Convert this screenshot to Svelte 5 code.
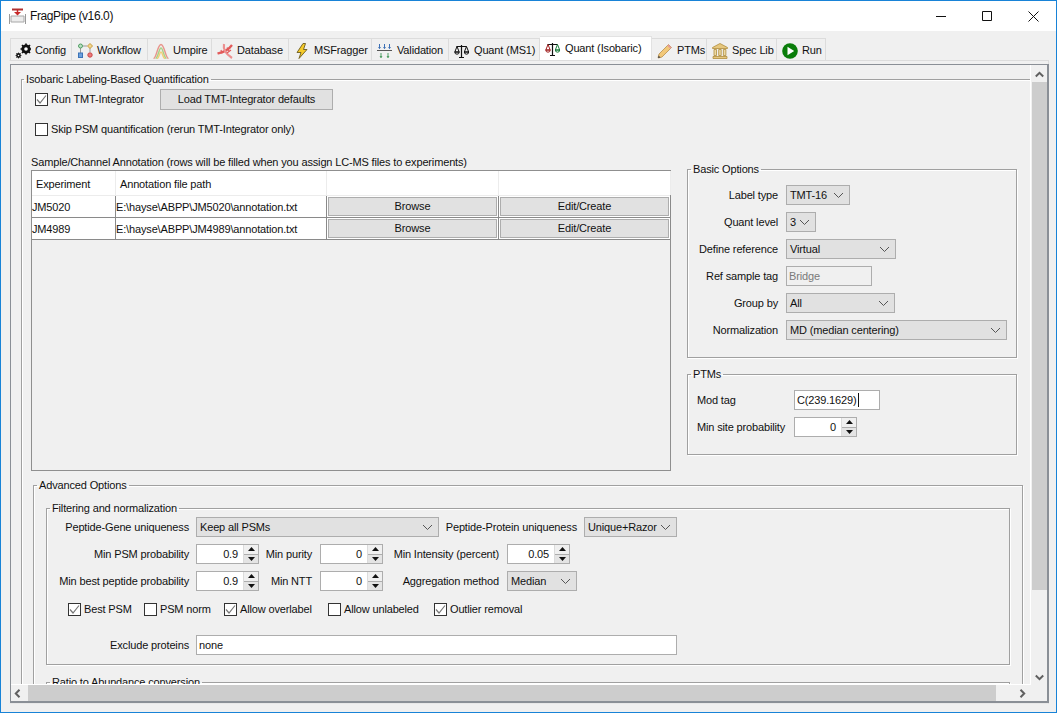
<script>
  const tabs = [
    ['Config', 'gear'], ['Workflow', 'flow'], ['Umpire', 'peak'], ['Database', 'dna'],
    ['MSFragger', 'bolt'], ['Validation', 'valid'], ['Quant (MS1)', 'scale'],
    ['Quant (Isobaric)', 'scale2'], ['PTMs', 'pencil'], ['Spec Lib', 'lib'], ['Run', 'run']
  ];
</script>

{#snippet combo(text, cls)}
  <div class="combo {cls}"><span>{text}</span>
    <svg class="chev" width="11" height="7" viewBox="0 0 11 7"><path d="M1 1l4.500 4.500L10 1" fill="none" stroke="#555" stroke-width="1"/></svg>
  </div>
{/snippet}

{#snippet spin(value, cls)}
  <div class="spin {cls}">
    <span class="val">{value}</span>
    <div class="arrows">
      <div class="ar"><svg width="7" height="4" viewBox="0 0 7 4"><path d="M3.500 0L7 4H0z" fill="#111"/></svg></div>
      <div class="ar"><svg width="7" height="4" viewBox="0 0 7 4"><path d="M0 0h7L3.500 4z" fill="#111"/></svg></div>
    </div>
  </div>
{/snippet}

{#snippet check(text, on, cls)}
  <div class="chk {cls}">
    <div class="box">
      {#if on}<svg width="11" height="11" viewBox="0 0 11 11"><path d="M1 5.500l3 3.500L10 1.500" fill="none" stroke="#777" stroke-width="1.200"/></svg>{/if}
    </div>
    <span>{text}</span>
  </div>
{/snippet}

{#snippet tabIcon(k)}
  <svg class="ticon" width="16" height="16" viewBox="0 0 16 16">
    {#if k === 'gear'}
      <circle cx="11" cy="6" r="3.200" fill="#fff" stroke="#111" stroke-width="2.800"/>
      <path d="M11 .5v2.500M11 9v2.500M5.500 6h2.500M14 6h2M7 2l2 2M15 2l-2 2M7 10l2-2M15 10l-2-2" stroke="#111" stroke-width="1.700"/>
      <circle cx="3.500" cy="12.500" r="1.600" fill="#fff" stroke="#111" stroke-width="1.600"/>
      <path d="M3.500 9.600v1M3.500 14.400v1M.6 12.500h1M5.400 12.500h1M1.400 10.400l.8.8M5.600 10.400l-.8.8M1.400 14.600l.8-.8M5.600 14.600l-.8-.8" stroke="#111" stroke-width=".9"/>
    {:else if k === 'flow'}
      <path d="M3.500 5v5M6 3h4M13 5v4" stroke="#999" stroke-width="1" fill="none"/>
      <circle cx="3.500" cy="3" r="2" fill="#b9e0c0" stroke="#4f9e63"/>
      <path d="M13 .5l2.500 2.500L13 5.500 10.500 3z" fill="#f2d68c" stroke="#c79a3a"/>
      <rect x="1.500" y="10" width="4" height="4.500" fill="#6da1dc" stroke="#3c74b8"/>
      <circle cx="13" cy="12" r="2.200" fill="#ee7b7b" stroke="#c84848"/>
    {:else if k === 'peak'}
      <path d="M.5 15.500C3.500 15.500 4.500 1.500 8 1.500s4.500 14 7.500 14" fill="none" stroke="#e8958c" stroke-width="1.500"/>
      <path d="M2.500 15.500C5 15.500 6 5 8 5s3 10.500 5.500 10.500" fill="none" stroke="#a9d08a" stroke-width="1.500"/>
      <path d="M4 15.500C6 15.500 6.500 9 8 9s2 6.500 4 6.500" fill="none" stroke="#f0cf78" stroke-width="1.500"/>
    {:else if k === 'dna'}
      <path d="M.5 10.500C4 9.500 10 9 15 2" fill="none" stroke="#e25a5a" stroke-width="2.200"/>
      <path d="M7 1c-1 5 2 10 8 14" fill="none" stroke="#ec9090" stroke-width="2.200"/>
      <path d="M4 7l1 3.500M10 4.500l2 3.500M10 10l4-3" stroke="#e25a5a" stroke-width="1.200"/>
    {:else if k === 'bolt'}
      <path d="M9 .5L3 9.500h4L5 15.500 13 6.500H9.500L11.500 .5z" fill="#f6cb2a" stroke="#6b5a1e" stroke-width=".9"/>
    {:else if k === 'valid'}
      <path d="M0 7.500h15" stroke="#555" stroke-width="1"/>
      <path d="M2.500 1v4.500M7.500 1v4.500M12.500 1v4.500" stroke="#3b6fb5"/>
      <path d="M1 4l1.500 2L4 4zM6 4l1.500 2L9 4zM11 4l1.500 2L14 4z" fill="#3b6fb5"/>
      <path d="M4 10v5M11 10v5" stroke="#4f9e63"/>
      <path d="M2.500 13l1.500 2 1.500-2zM9.500 13l1.500 2 1.500-2z" fill="#4f9e63"/>
    {:else if k === 'scale' || k === 'scale2'}
      <path d="M7.500 2v12M5 14.500h5M2.500 3.500h10" stroke="#111" stroke-width="1.200" fill="none"/>
      <path d="M3 3.500L.8 9h4.400zM.8 9a2.200 2.200 0 0 0 4.400 0z" fill="none" stroke={k === 'scale2' ? '#a01c1c' : '#111'}/>
      <path d="M12.500 3.500L10.300 9h4.400zM10.300 9a2.200 2.200 0 0 0 4.400 0z" fill="none" stroke={k === 'scale2' ? '#1c7c3c' : '#111'}/>
    {:else if k === 'pencil'}
      <path d="M1 15l1-4L11.500 1.500l3 3L5 14z" fill="#f2c879" stroke="#b98f4c" stroke-width=".8"/>
      <path d="M11.500 1.500l3 3-1.200 1.200-3-3z" fill="#e59a9a"/>
      <path d="M1 15l.6-2.500 1.900 1.900z" fill="#444"/>
    {:else if k === 'lib'}
      <path d="M8 .5L15.500 4.500v1H.5v-1z" fill="#e6c77e" stroke="#b08d3c" stroke-width=".8"/>
      <path d="M2 6.500h2.500v6H2zM6.700 6.500h2.500v6H6.700zM11.400 6.500h2.500v6h-2.500z" fill="#ecd9a3" stroke="#b08d3c" stroke-width=".8"/>
      <path d="M1 13.500h14v2H1z" fill="#e6c77e" stroke="#b08d3c" stroke-width=".8"/>
    {:else}
      <circle cx="8" cy="8" r="7.800" fill="#0a7d0a"/>
      <path d="M5.500 3.800L12.200 8 5.500 12.200z" fill="#fff"/>
    {/if}
  </svg>
{/snippet}

<div class="window">
  <header class="title">
    <svg class="appicon" width="17" height="16" viewBox="0 0 17 16">
      <path d="M2 8h13v6H2z" fill="#ececec" stroke="#a8a8a8"/>
      <path d="M.5 6v10M16.500 6v10" stroke="#9a9a9a"/>
      <path d="M3 1.500h11" stroke="#b03030" stroke-width="2"/>
      <path d="M8.500 2v3" stroke="#c62828" stroke-width="1.500"/>
      <path d="M5 4h7l-3.500 3.500z" fill="#c62828"/>
    </svg>
    <span class="ttext">FragPipe (v16.0)</span>
    <div class="wbtns">
      <div class="wbtn"><svg width="10" height="10" viewBox="0 0 10 10"><path d="M0 5.500h10" stroke="#111"/></svg></div>
      <div class="wbtn"><svg width="10" height="10" viewBox="0 0 10 10"><path d="M.5 .5h9v9h-9z" fill="none" stroke="#111"/></svg></div>
      <div class="wbtn"><svg width="11" height="11" viewBox="0 0 11 11"><path d="M.5 .5l10 10M10.500 .5l-10 10" stroke="#111"/></svg></div>
    </div>
  </header>

  <nav class="tabs">
    {#each tabs as [name, icon], i}
      <div class="tab" class:active={i === 7}>
        {@render tabIcon(icon)}
        <span>{name}</span>
      </div>
    {/each}
  </nav>

  <main class="pane">
    <div class="scroll">
      <div class="viewport">
        <fieldset class="group outer">
          <legend>Isobaric Labeling-Based Quantification</legend>
          <div class="toprow">
            {@render check('Run TMT-Integrator', true, 'run')}
            <div class="btn load">Load TMT-Integrator defaults</div>
          </div>
          {@render check('Skip PSM quantification (rerun TMT-Integrator only)', false, 'skip')}

          <div class="columns">
            <section class="annot">
              <div class="annot-title">Sample/Channel Annotation (rows will be filled when you assign LC-MS files to experiments)</div>
              <div class="table">
                <div class="trow head">
                  <div class="th">Experiment</div><div class="th">Annotation file path</div><div class="th"></div><div class="th"></div>
                </div>
                <div class="trow">
                  <div class="td">JM5020</div><div class="td">E:\hayse\ABPP\JM5020\annotation.txt</div>
                  <div class="td bc"><div class="btn">Browse</div></div><div class="td bc"><div class="btn">Edit/Create</div></div>
                </div>
                <div class="trow">
                  <div class="td">JM4989</div><div class="td">E:\hayse\ABPP\JM4989\annotation.txt</div>
                  <div class="td bc"><div class="btn">Browse</div></div><div class="td bc"><div class="btn">Edit/Create</div></div>
                </div>
              </div>
            </section>

            <aside class="side">
              <fieldset class="group basic">
                <legend>Basic Options</legend>
                <div class="form">
                  <label>Label type</label>{@render combo('TMT-16', 'w64')}
                  <label>Quant level</label>{@render combo('3', 'w30')}
                  <label>Define reference</label>{@render combo('Virtual', 'w110')}
                  <label>Ref sample tag</label><div class="text disabled w86">Bridge</div>
                  <label>Group by</label>{@render combo('All', 'w109')}
                  <label>Normalization</label>{@render combo('MD (median centering)', 'w221')}
                </div>
              </fieldset>
              <fieldset class="group ptms">
                <legend>PTMs</legend>
                <div class="ptmform">
                  <label>Mod tag</label><div class="text w86 caret">C(239.1629)<i></i></div>
                  <label>Min site probability</label>{@render spin('0', 'w63')}
                </div>
              </fieldset>
            </aside>
          </div>

          <fieldset class="group adv">
            <legend>Advanced Options</legend>
            <fieldset class="group filt">
              <legend>Filtering and normalization</legend>
              <div class="frow">
                <label class="l1">Peptide-Gene uniqueness</label>
                {@render combo('Keep all PSMs', 'w243')}
                <label class="l-pp">Peptide-Protein uniqueness</label>
                {@render combo('Unique+Razor', 'w93')}
              </div>
              <div class="frow">
                <label class="l1">Min PSM probability</label>
                {@render spin('0.9', 'w63')}
                <label class="l2">Min purity</label>
                {@render spin('0', 'w63')}
                <label class="l3">Min Intensity (percent)</label>
                {@render spin('0.05', 'w63')}
              </div>
              <div class="frow">
                <label class="l1">Min best peptide probability</label>
                {@render spin('0.9', 'w63')}
                <label class="l2">Min NTT</label>
                {@render spin('0', 'w63')}
                <label class="l3">Aggregation method</label>
                {@render combo('Median', 'w70')}
              </div>
              <div class="checks">
                {@render check('Best PSM', true, 'c1')}
                {@render check('PSM norm', false, 'c2')}
                {@render check('Allow overlabel', true, 'c3')}
                {@render check('Allow unlabeled', false, 'c4')}
                {@render check('Outlier removal', true, 'c5')}
              </div>
              <div class="frow exclude">
                <label class="l1">Exclude proteins</label>
                <div class="text w481">none</div>
              </div>
            </fieldset>
            <fieldset class="group ratio">
              <legend>Ratio to Abundance conversion</legend>
            </fieldset>
          </fieldset>
        </fieldset>
      </div>

      <div class="vbar">
        <svg width="9" height="7" viewBox="0 0 9 7"><path d="M.8 5.500l3.700-3.700 3.700 3.700" fill="none" stroke="#606060" stroke-width="2"/></svg>
        <div class="vtrack"><div class="vthumb"></div></div>
        <svg width="9" height="7" viewBox="0 0 9 7"><path d="M.8 1.500l3.700 3.700 3.700-3.700" fill="none" stroke="#606060" stroke-width="2"/></svg>
      </div>
      <div class="hbar">
        <svg width="7" height="9" viewBox="0 0 7 9"><path d="M5.500 .8L1.800 4.500l3.700 3.700" fill="none" stroke="#606060" stroke-width="2"/></svg>
        <div class="htrack"><div class="hthumb"></div></div>
        <svg width="7" height="9" viewBox="0 0 7 9"><path d="M1.500 .8l3.700 3.700-3.700 3.700" fill="none" stroke="#606060" stroke-width="2"/></svg>
      </div>
      <div class="corner"></div>
    </div>
  </main>
</div>

<style>
  :global(body) { margin: 0; background: #f0f0f0; }
  * { box-sizing: border-box; }
  .window {
    width: 1057px; height: 713px; border: 1px solid #1883d7; background: #f0f0f0;
    display: flex; flex-direction: column; overflow: hidden;
    font: 11px/13px "Liberation Sans", sans-serif; letter-spacing: -0.15px; color: #111;
  }
  .title { height: 30px; background: #fff; display: flex; align-items: center; padding-left: 8px; flex: none; }
  .appicon { margin-right: 4px; }
  .ttext { font: 12px "Liberation Sans", sans-serif; letter-spacing: -0.4px; color: #111; }
  .wbtns { margin-left: auto; display: flex; }
  .wbtn { width: 46px; height: 30px; display: flex; align-items: center; justify-content: center; }

  .tabs {
    flex: none; height: 29px; padding: 7px 0 0 9px; display: grid;
    grid-template-columns: 62px 76px 64px 77px 83px 77px 91px 112px 55px 70px 49px;
    grid-template-rows: 22px; justify-content: start;
  }
  .tab {
    background: #f0f0f0; border: 1px solid #dcdcdc; border-left: 0; border-bottom: 0;
    display: flex; align-items: center; padding: 2px 0 0 5px; gap: 4px; white-space: nowrap; color: #111;
  }
  .tab:first-child { border-left: 1px solid #dcdcdc; padding-left: 4px; }
  .tab.active {
    background: #fff; margin-top: -2px; height: 24px; padding: 1px 0 1px 5px; border-color: #e2e2e2;
  }
  .ticon { flex: none; }

  .pane {
    flex: none; margin-left: 8px; width: 1040px; height: 644px;
    border: 1px solid #dcdcdc; border-bottom-color: #e8e8e8; border-left-color: #f0f0f0; padding: 3px 0 0 0;
  }
  .scroll {
    width: 1039px; height: 639px; border: 2px solid #8a8f96; border-width: 1px 2px 2px 1px;
    display: grid; grid-template-columns: 1020px 16px; grid-template-rows: 620px 16px;
    background: #f0f0f0; margin-left: 0;
  }
  .viewport { overflow: hidden; border-right: 1px solid #fff; border-bottom: 1px solid #fff; padding: 8px 0 0 10px; }

  fieldset.group { margin: 0; padding: 0; border: 1px solid #a0a0a0; box-shadow: 1px 1px 0 #fff, inset 1px 1px 0 #fff; min-width: 0; }
  legend { margin-left: 3px; padding: 0 2px; font-size: 11px; line-height: 13px; color: #111; white-space: nowrap; }
  .outer > legend { margin-left: -11px; }
  .adv > legend { margin-left: -9px; }

  fieldset.outer { width: 1040px; height: 680px; padding: 3px 0 0 13px; }
  .toprow { display: flex; align-items: center; height: 21px; }
  .chk { display: flex; align-items: center; gap: 3px; white-space: nowrap; }
  .box { width: 13px; height: 13px; border: 1px solid #333; background: #fff; flex: none; display: flex; align-items: center; justify-content: center; }
  .chk.run { width: 125px; }
  .chk.skip { margin-top: 13px; height: 13px; }
  .btn { background: #e1e1e1; border: 1px solid #adadad; display: flex; align-items: center; justify-content: center; color: #111; }
  .load { width: 173px; height: 21px; }

  .columns { display: flex; margin-left: -4px; margin-top: 15px; height: 321px; }
  .annot { width: 656px; flex: none; padding-top: 5px; }
  .annot-title { height: 14px; white-space: nowrap; }
  .table { width: 640px; height: 301px; border: 1px solid #8f8f8f; background: #f0f0f0; }
  .trow { display: grid; grid-template-columns: 84px 211px 172px 172px; height: 22px; background: #fff; border-bottom: 1px solid #8a8a8a; }
  .trow.head { height: 25px; border-bottom: 1px solid #ececec; }
  .th { padding: 7px 0 0 4px; border-right: 1px solid #ececec; }
  .td { padding: 5px 0 0 0; border-right: 1px solid #8a8a8a; white-space: nowrap; }
  .td.bc { padding: 1px; }
  .td .btn { height: 19px; }

  .side { width: 329px; flex: none; display: flex; flex-direction: column; gap: 10px; padding-top: 0; }
  fieldset.basic { height: 195px; width: 330px; margin-top: 12px; }
  fieldset.ptms { height: 87px; width: 330px; }
  .form { display: grid; grid-template-columns: 90px auto; column-gap: 8px; row-gap: 7px; grid-auto-rows: 20px; justify-items: start; align-items: center; padding-top: 9px; }
  .form label { justify-self: end; white-space: nowrap; }
  .ptmform { display: grid; grid-template-columns: 97px auto; grid-auto-rows: 20px; row-gap: 7px; align-items: center; padding: 9px 0 0 9px; }
  label { white-space: nowrap; }

  .combo { height: 20px; background: #e1e1e1; border: 1px solid #adadad; display: flex; align-items: center; justify-content: space-between; padding: 0 5px 0 2px; white-space: nowrap; }
  .combo span { padding-left: 1px; }
  .chev { flex: none; }
  .text { height: 20px; background: #fff; border: 1px solid #adadad; display: flex; align-items: center; padding-left: 2px; white-space: nowrap; }
  .text.disabled { background: #f0f0f0; color: #7a7a7a; }
  .caret i { display: block; width: 1px; height: 14px; background: #111; margin-left: 1px; }
  .spin { height: 20px; background: #fff; border: 1px solid #adadad; display: flex; }
  .val { flex: 1; text-align: right; padding: 3px 5px 0 0; }
  .arrows { width: 15px; display: flex; flex-direction: column; border-left: 1px solid #dcdcdc; flex: none; }
  .ar { flex: 1; background: #f0f0f0; border-bottom: 1px solid #adadad; display: flex; align-items: center; justify-content: center; }
  .ar:last-child { border-bottom: 0; background: #e4e4e4; }

  .w30 { width: 30px; } .w63 { width: 63px; } .w64 { width: 64px; } .w70 { width: 70px; }
  .w86 { width: 86px; } .w93 { width: 93px; } .w109 { width: 109px; } .w110 { width: 110px; }
  .w221 { width: 221px; } .w243 { width: 243px; } .w481 { width: 481px; }

  fieldset.adv { width: 990px; height: 240px; margin: 7px 0 0 -2px; padding: 10px 0 0 12px; }
  fieldset.filt { width: 964px; height: 163px; padding: 2px 0 0 0; }
  .frow { display: flex; align-items: center; height: 20px; margin-top: 7px; }
  .filt .frow:first-of-type { margin-top: 0; }
  .frow label { text-align: right; flex: none; }
  .l1 { width: 142px; margin-right: 7px; }
  .l-pp { width: 138px; margin-right: 7px; }
  .l2 { width: 53px; margin-right: 8px; }
  .l3 { width: 116px; margin-right: 8px; }
  .checks { display: flex; margin: 12px 0 0 21px; height: 13px; }
  .c1 { width: 76px; } .c2 { width: 80px; } .c3 { width: 104px; } .c4 { width: 106px; }
  .exclude { margin-top: 19px; }
  fieldset.ratio { width: 964px; height: 60px; margin-top: 11px; }

  .vbar { background: #f0f0f0; display: flex; flex-direction: column; align-items: center; padding-top: 6px; }
  .vtrack { flex: 1; width: 15px; margin-top: 4px; margin-bottom: 6px; }
  .vthumb { height: 508px; background: #cdcdcd; }
  .vbar svg { flex: none; }
  .vbar svg:last-child { margin-bottom: 4px; }
  .hbar { display: flex; align-items: center; padding: 0 5px 0 3px; }
  .htrack { flex: 1; padding: 0 9px 0 7px; height: 16px; }
  .hthumb { width: 968px; height: 16px; background: #cdcdcd; }
  .corner { background: #f0f0f0; }
</style>
